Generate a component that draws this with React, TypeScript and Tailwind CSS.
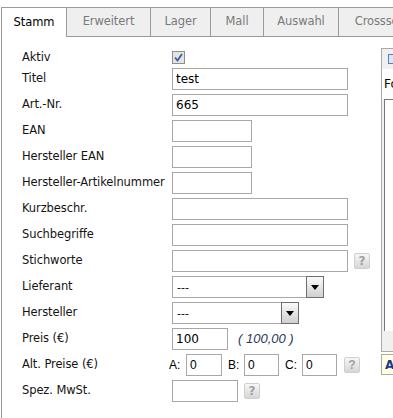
import React from "react";

const tabs = [
  { label: "Stamm", w: "w-[66px]", active: true },
  { label: "Erweitert", w: "w-[84px]" },
  { label: "Lager", w: "w-[60px]" },
  { label: "Mall", w: "w-[53px]" },
  { label: "Auswahl", w: "w-[75px]" },
  { label: "Crossselling", w: "w-[100px]" },
];

function Input({ w, value }: { w: string; value?: string }) {
  return (
    <div
      className={
        "flex h-[22px] shrink-0 items-center border border-[#a8a8a8] bg-white px-[3px] text-[12px] text-black " +
        w
      }
    >
      {value}
    </div>
  );
}

function Select({ w }: { w: string }) {
  return (
    <div className={"flex h-[22px] items-center border border-[#a8a8a8] bg-white " + w}>
      <span className="flex-1 pl-[4px] text-[11px] leading-none text-black">---</span>
      <span className="-mr-px flex h-[22px] w-[18px] items-center justify-center border border-[#6e6e6e] bg-gradient-to-b from-[#fafafa] to-[#d0d0d0]">
        <svg width="8" height="5" viewBox="0 0 8 5">
          <path d="M0 0h8L4 5z" fill="#000" />
        </svg>
      </span>
    </div>
  );
}

function Help() {
  return (
    <span className="flex h-[16px] w-[16px] shrink-0 items-center justify-center rounded-[2px] border border-[#cfcfcf] bg-gradient-to-b from-[#f7f7f7] to-[#d6d6d6] text-[12px] font-bold leading-none text-[#a0a0a0]">
      ?
    </span>
  );
}

function Row({ label, children }: { label: string; children: React.ReactNode }) {
  return (
    <div className="flex h-[22px] items-center">
      <span className="w-[150px] shrink-0 tracking-[-0.1px]">{label}</span>
      <div className="flex items-center">{children}</div>
    </div>
  );
}

export default function App() {
  return (
    <div className="h-[418px] w-[393px] overflow-hidden bg-white pl-px font-['DejaVu_Sans',sans-serif] text-[11.5px] text-[#141414]">
      <div className="flex pt-[7px]">
        {tabs.map((t, i) => (
          <div
            key={t.label}
            className={
              "flex h-[30px] shrink-0 items-center justify-center border-t border-r border-[#9a9a9a] tracking-[-0.1px] " +
              t.w +
              (i === 0 ? " border-l" : "") +
              (t.active ? " bg-white text-black" : " border-b bg-[#efefef] text-[#7a7a7a]")
            }
          >
            {t.label}
          </div>
        ))}
      </div>
      <div className="flex h-[382px] border-l border-[#9a9a9a]">
        <div className="flex w-[379px] shrink-0 flex-col gap-[4px] pt-[14px] pl-[20px]">
          <div className="flex h-[13px] items-center">
            <span className="w-[150px] shrink-0 tracking-[-0.1px]">Aktiv</span>
            <span className="flex h-[13px] w-[13px] items-center justify-center border border-[#8e8e8e] bg-[#e4e4e4]">
              <svg width="9" height="9" viewBox="0 0 9 9">
                <path d="M1 4.5l2.5 3L8 1" fill="none" stroke="#3a5fa8" strokeWidth="1.8" />
              </svg>
            </span>
          </div>
          <Row label="Titel">
            <Input w="w-[176px]" value="test" />
          </Row>
          <Row label="Art.-Nr.">
            <Input w="w-[176px]" value="665" />
          </Row>
          <Row label="EAN">
            <Input w="w-[80px]" />
          </Row>
          <Row label="Hersteller EAN">
            <Input w="w-[80px]" />
          </Row>
          <Row label="Hersteller-Artikelnummer">
            <Input w="w-[80px]" />
          </Row>
          <Row label="Kurzbeschr.">
            <Input w="w-[176px]" />
          </Row>
          <Row label="Suchbegriffe">
            <Input w="w-[176px]" />
          </Row>
          <Row label="Stichworte">
            <Input w="w-[176px]" />
            <span className="ml-[6px]">
              <Help />
            </span>
          </Row>
          <Row label="Lieferant">
            <Select w="w-[152px]" />
          </Row>
          <Row label="Hersteller">
            <Select w="w-[127px]" />
          </Row>
          <Row label="Preis (€)">
            <Input w="w-[56px]" value="100" />
            <span className="ml-[10px] font-['Liberation_Sans',sans-serif] text-[13px] text-[#2c3a5c] italic">
              ( 100,00 )
            </span>
          </Row>
          <Row label="Alt. Preise (€)">
            <div className="-ml-[3px] flex items-center font-['Liberation_Sans',sans-serif] text-[12px] text-black">
              <span className="w-[17px]">A:</span>
              <Input w="w-[36px]" value="0" />
              <span className="ml-[6px] w-[16px]">B:</span>
              <Input w="w-[35px]" value="0" />
              <span className="ml-[6px] w-[17px]">C:</span>
              <Input w="w-[35px]" value="0" />
              <span className="ml-[7px]">
                <Help />
              </span>
            </div>
          </Row>
          <Row label="Spez. MwSt.">
            <Input w="w-[66px]" />
            <span className="ml-[6px]">
              <Help />
            </span>
          </Row>
        </div>
        <div className="mt-[11px] flex w-[40px] shrink-0 flex-col">
          <div className="flex h-[304px] flex-col border-t border-l border-b border-[#aaaaaa] bg-[#f0f0f0]">
            <div className="flex h-[20px] items-center pl-[6px]">
              <span className="h-[10px] w-[10px] border border-[#5a7fc0] bg-[#dce8fa]" />
            </div>
            <div className="flex h-[30px] items-center bg-white pl-[2px] text-[12px] text-black">Format</div>
            <div className="ml-[2px] h-[232px] border-t border-l border-[#777] bg-white" />
          </div>
          <div className="mt-[2px] flex h-[21px] items-center border border-[#aaaaaa] bg-[#ffffe4] pl-[3px] text-[12px] font-bold text-[#1a3a8a]">
            A
          </div>
        </div>
      </div>
    </div>
  );
}
